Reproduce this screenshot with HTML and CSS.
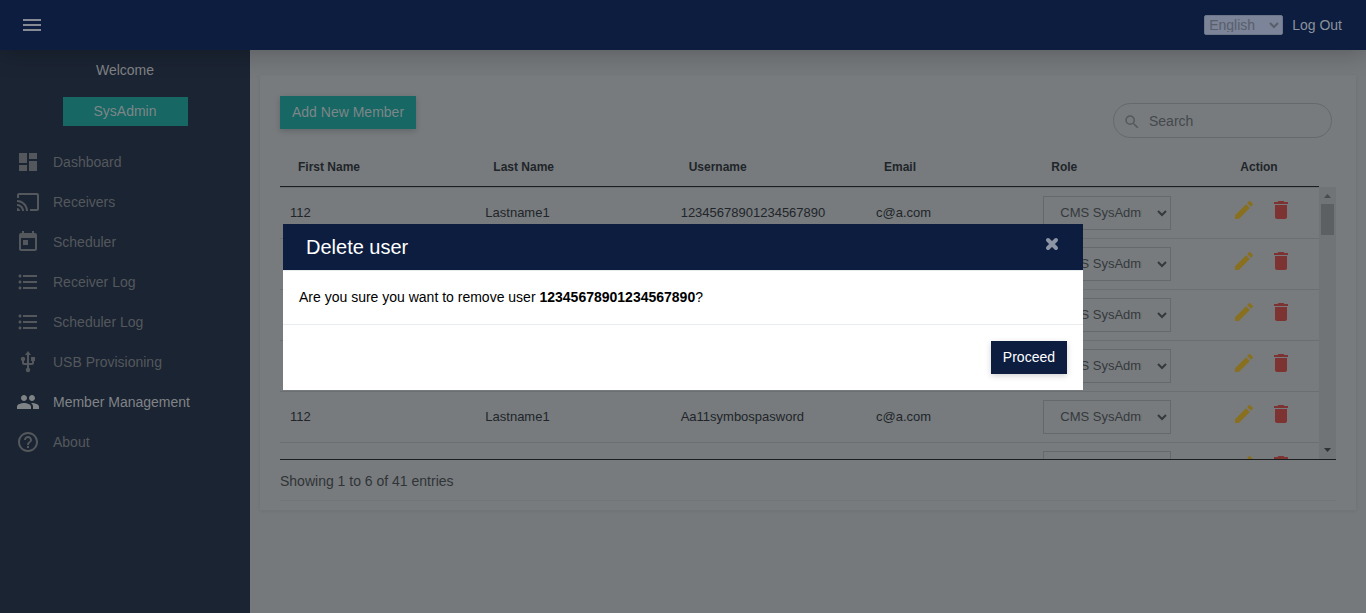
FILE: index.html
```
<!DOCTYPE html>
<html lang="en">
<head>
<meta charset="utf-8">
<title>Member Management</title>
<link rel="stylesheet" href="styles.css">
</head>
<body>
<svg class="sprite" aria-hidden="true">
  <symbol id="i-edit" viewBox="0 0 24 24"><path d="M3 17.25V21h3.75L17.81 9.94l-3.75-3.75L3 17.25zM20.71 7.04a1 1 0 0 0 0-1.41l-2.34-2.34a1 1 0 0 0-1.41 0l-1.83 1.83 3.75 3.75 1.83-1.83z"/></symbol>
  <symbol id="i-delete" viewBox="0 0 24 24"><path d="M6 19c0 1.1.9 2 2 2h8c1.1 0 2-.9 2-2V7H6v12zM19 4h-3.500l-1-1h-5l-1 1H5v2h14V4z"/></symbol>
  <symbol id="i-list" viewBox="0 0 24 24"><path d="M4 10.5c-.83 0-1.500.67-1.500 1.500s.67 1.500 1.500 1.500 1.500-.67 1.500-1.500-.67-1.500-1.500-1.500zm0-6c-.83 0-1.500.67-1.500 1.500S3.170 7.500 4 7.500 5.500 6.830 5.500 6 4.830 4.500 4 4.500zm0 12c-.83 0-1.500.68-1.500 1.500s.68 1.500 1.500 1.500 1.500-.68 1.500-1.500-.67-1.500-1.500-1.500zM7 19h14v-2H7v2zm0-6h14v-2H7v2zm0-8v2h14V5H7z"/></symbol>
</svg>

<header class="topbar">
  <button class="menu-btn" type="button" aria-label="Toggle menu"><svg class="icon" viewBox="0 0 24 24"><path d="M3 18h18v-2H3v2zm0-5h18v-2H3v2zm0-7v2h18V6H3z"/></svg></button>
  <div class="topbar-right">
    <select class="language" aria-label="Language"><option>English</option></select>
    <a class="logout" href="#">Log Out</a>
  </div>
</header>

<div class="layout">
  <aside class="sidebar">
    <p class="welcome">Welcome</p>
    <button class="user-btn" type="button">SysAdmin</button>
    <nav class="nav">
      <a class="nav-link" href="#"><svg class="icon" viewBox="0 0 24 24"><path d="M3 13h8V3H3v10zm0 8h8v-6H3v6zm10 0h8V11h-8v10zm0-18v6h8V3h-8z"/></svg>Dashboard</a>
      <a class="nav-link" href="#"><svg class="icon" viewBox="0 0 24 24"><path d="M21 3H3c-1.100 0-2 .9-2 2v3h2V5h18v14h-7v2h7c1.100 0 2-.9 2-2V5c0-1.100-.9-2-2-2zM1 18v3h3c0-1.660-1.340-3-3-3zm0-4v2c2.760 0 5 2.240 5 5h2c0-3.870-3.130-7-7-7zm0-4v2c4.970 0 9 4.030 9 9h2c0-6.080-4.930-11-11-11z"/></svg>Receivers</a>
      <a class="nav-link" href="#"><svg class="icon" viewBox="0 0 24 24"><path d="M19 3h-1V1h-2v2H8V1H6v2H5c-1.110 0-1.990.9-1.990 2L3 19c0 1.100.89 2 2 2h14c1.100 0 2-.9 2-2V5c0-1.100-.9-2-2-2zm0 16H5V8h14v11zM7 10h5v5H7z"/></svg>Scheduler</a>
      <a class="nav-link" href="#"><svg class="icon"><use href="#i-list"/></svg>Receiver Log</a>
      <a class="nav-link" href="#"><svg class="icon"><use href="#i-list"/></svg>Scheduler Log</a>
      <a class="nav-link" href="#"><svg class="icon" viewBox="0 0 24 24"><path d="M15 7v4h1v2h-3V5h2l-3-4-3 4h2v8H8v-2.070c.7-.37 1.200-1.080 1.200-1.930 0-1.210-.99-2.200-2.200-2.200S4.800 7.790 4.800 9c0 .85.5 1.560 1.200 1.930V13c0 1.110.89 2 2 2h3v3.050c-.71.37-1.200 1.100-1.200 1.950a2.200 2.200 0 0 0 4.400 0c0-.85-.49-1.580-1.200-1.950V15h3c1.110 0 2-.89 2-2v-2h1V7h-4z"/></svg>USB Provisioning</a>
      <a class="nav-link active" href="#" aria-current="page"><svg class="icon" viewBox="0 0 24 24"><path d="M16 11c1.660 0 2.990-1.340 2.990-3S17.660 5 16 5s-3 1.340-3 3 1.340 3 3 3zm-8 0c1.660 0 2.990-1.340 2.990-3S9.660 5 8 5 5 6.340 5 8s1.340 3 3 3zm0 2c-2.330 0-7 1.170-7 3.500V19h14v-2.500C15 14.170 10.330 13 8 13zm8 0c-.29 0-.62.02-.97.05 1.160.84 1.970 1.970 1.970 3.450V19h6v-2.500c0-2.330-4.670-3.500-7-3.500z"/></svg>Member Management</a>
      <a class="nav-link" href="#"><svg class="icon" viewBox="0 0 24 24"><path d="M11 18h2v-2h-2v2zm1-16C6.480 2 2 6.480 2 12s4.480 10 10 10 10-4.480 10-10S17.520 2 12 2zm0 18c-4.410 0-8-3.590-8-8s3.590-8 8-8 8 3.590 8 8-3.590 8-8 8zm0-14c-2.210 0-4 1.790-4 4h2c0-1.100.9-2 2-2s2 .9 2 2c0 2-3 1.750-3 5h2c0-2.250 3-2.500 3-5 0-2.210-1.790-4-4-4z"/></svg>About</a>
    </nav>
  </aside>

  <main class="content">
    <section class="card">
      <div class="toolbar">
        <button class="btn btn-teal" type="button">Add New Member</button>
        <label class="search">
          <svg class="search-icon" viewBox="0 0 24 24"><path d="M15.500 14h-.79l-.28-.27A6.470 6.470 0 0 0 16 9.500 6.500 6.500 0 1 0 9.500 16c1.610 0 3.090-.59 4.230-1.570l.27.28v.79l5 4.990L20.490 19l-4.990-5zm-6 0C7.010 14 5 11.990 5 9.500S7.010 5 9.500 5 14 7.010 14 9.500 11.990 14 9.500 14z"/></svg>
          <input class="search-input" type="text" placeholder="Search" aria-label="Search">
        </label>
      </div>

      <div class="table-area">
        <div class="table-scroll">
          <table class="members">
            <colgroup><col class="c-name"><col class="c-name"><col class="c-name"><col class="c-email"><col class="c-role"><col></colgroup>
            <thead><tr><th>First Name</th><th>Last Name</th><th>Username</th><th>Email</th><th>Role</th><th>Action</th></tr></thead>
            <tbody>
              <tr><td>112</td><td>Lastname1</td><td>12345678901234567890</td><td>c@a.com</td><td><select class="role" aria-label="Role"><option>CMS SysAdmin</option></select></td><td><div class="actions"><button type="button" class="edit" aria-label="Edit"><svg class="icon"><use href="#i-edit"/></svg></button><button type="button" class="delete" aria-label="Delete"><svg class="icon"><use href="#i-delete"/></svg></button></div></td></tr>
              <tr><td></td><td></td><td></td><td></td><td><select class="role" aria-label="Role"><option>CMS SysAdmin</option></select></td><td><div class="actions"><button type="button" class="edit" aria-label="Edit"><svg class="icon"><use href="#i-edit"/></svg></button><button type="button" class="delete" aria-label="Delete"><svg class="icon"><use href="#i-delete"/></svg></button></div></td></tr>
              <tr><td></td><td></td><td></td><td></td><td><select class="role" aria-label="Role"><option>CMS SysAdmin</option></select></td><td><div class="actions"><button type="button" class="edit" aria-label="Edit"><svg class="icon"><use href="#i-edit"/></svg></button><button type="button" class="delete" aria-label="Delete"><svg class="icon"><use href="#i-delete"/></svg></button></div></td></tr>
              <tr><td></td><td></td><td></td><td></td><td><select class="role" aria-label="Role"><option>CMS SysAdmin</option></select></td><td><div class="actions"><button type="button" class="edit" aria-label="Edit"><svg class="icon"><use href="#i-edit"/></svg></button><button type="button" class="delete" aria-label="Delete"><svg class="icon"><use href="#i-delete"/></svg></button></div></td></tr>
              <tr><td>112</td><td>Lastname1</td><td>Aa11symbospasword</td><td>c@a.com</td><td><select class="role" aria-label="Role"><option>CMS SysAdmin</option></select></td><td><div class="actions"><button type="button" class="edit" aria-label="Edit"><svg class="icon"><use href="#i-edit"/></svg></button><button type="button" class="delete" aria-label="Delete"><svg class="icon"><use href="#i-delete"/></svg></button></div></td></tr>
              <tr><td></td><td></td><td></td><td></td><td><select class="role" aria-label="Role"><option>CMS SysAdmin</option></select></td><td><div class="actions"><button type="button" class="edit" aria-label="Edit"><svg class="icon"><use href="#i-edit"/></svg></button><button type="button" class="delete" aria-label="Delete"><svg class="icon"><use href="#i-delete"/></svg></button></div></td></tr>
            </tbody>
          </table>
        </div>
        <div class="scrollbar" aria-hidden="true">
          <svg class="scroll-arrow" viewBox="0 0 17 17"><path d="M5 11L8.500 7L12 11z"/></svg>
          <div class="scroll-thumb"></div>
          <svg class="scroll-arrow scroll-down" viewBox="0 0 17 17"><path d="M5 6L8.500 10L12 6z"/></svg>
        </div>
      </div>
      <p class="entries">Showing 1 to 6 of 41 entries</p>
    </section>
  </main>
</div>

<div class="overlay">
  <div class="modal" role="dialog" aria-modal="true" aria-labelledby="modal-title">
    <div class="modal-header">
      <h1 class="modal-title" id="modal-title">Delete user</h1>
      <button class="close" type="button" aria-label="Close"><svg class="close-icon" viewBox="0 0 14 14"><path d="M3 3L11 11M11 3L3 11"/></svg></button>
    </div>
    <p class="modal-body">Are you sure you want to remove user <b>12345678901234567890</b>?</p>
    <div class="modal-footer"><button class="btn btn-navy" type="button">Proceed</button></div>
  </div>
</div>
</body>
</html>
```
FILE: styles.css
```
* { box-sizing: border-box; }

body {
  margin: 0;
  min-height: 100vh;
  display: flex;
  flex-direction: column;
  overflow: hidden;
  background: #75797c;
  color: #212529;
  font: 14px/20px "Liberation Sans", Arial, sans-serif;
}

button, select, input { font: inherit; color: inherit; }
button { border: 0; padding: 0; background: none; cursor: pointer; }
a { text-decoration: none; color: inherit; }
p, h1 { margin: 0; }
.sprite { display: none; }
.icon { display: block; width: 24px; height: 24px; fill: currentColor; }

.topbar {
  position: relative;
  z-index: 1;
  display: flex;
  align-items: center;
  justify-content: space-between;
  height: 50px;
  padding: 0 24px 0 20px;
  background: #0c1d3f;
  box-shadow: 0 4px 24px rgba(0, 0, 0, .22);
  color: #8d929c;
}
.menu-btn { color: #868a92; }
.topbar-right { display: flex; align-items: center; gap: 9px; }
.language {
  width: 79px;
  height: 20px;
  padding: 0 0 2px;
  border: 1px solid #6d7689;
  border-radius: 2px;
  background: #7b8498;
  color: #585e6b;
}

.layout { flex: 1; display: flex; }
.sidebar {
  flex: 0 0 250px;
  display: flex;
  flex-direction: column;
  align-items: center;
  padding-top: 10px;
  background: #1b2433;
}
.welcome { color: #808285; }
.user-btn {
  width: 125px;
  height: 29px;
  margin: 17px 0 16px;
  padding-bottom: 2px;
  background: #176764;
  color: #7d8688;
}
.nav { align-self: stretch; }
.nav-link {
  display: flex;
  align-items: center;
  gap: 13px;
  height: 40px;
  padding-left: 16px;
  color: #54585c;
}
.nav-link.active { color: #808386; }

.content { flex: 1; min-width: 0; padding: 25px 10px; }
.card {
  padding: 21px 20px 9px;
  background: #777b7e;
  box-shadow: 0 1px 4px rgba(0, 0, 0, .07);
}
.toolbar {
  display: flex;
  justify-content: space-between;
  align-items: flex-start;
  padding-right: 4px;
}
.btn {
  height: 33px;
  padding: 0 12px;
  box-shadow: 0 2px 6px rgba(0, 0, 0, .18);
}
.btn-teal { padding-bottom: 2px; background: #176764; color: #7d8688; }
.btn-navy { background: #0c1d3f; color: #fff; }
.search {
  display: flex;
  align-items: center;
  gap: 8px;
  width: 219px;
  height: 35px;
  margin-top: 7px;
  padding: 0 9px;
  border: 1px solid #66696c;
  border-radius: 18px;
}
.search-icon { flex: none; width: 18px; height: 18px; margin-top: 2px; fill: #55595c; }
.search-input { flex: 1; min-width: 0; padding: 0; border: 0; outline: 0; background: none; }
.search-input::placeholder { color: #44484c; opacity: 1; }

.table-area {
  display: flex;
  height: 322px;
  border-bottom: 1px solid #1b1d1f;
}
.table-scroll { flex: 1; overflow: hidden; }
.members {
  width: 100%;
  table-layout: fixed;
  border-spacing: 0;
  font-size: 13px;
}
.c-name { width: 18.8%; }
.c-email { width: 16.1%; }
.c-role { width: 18.2%; }
th {
  height: 49px;
  padding: 9px 18px 0;
  border-bottom: 1px solid #1b1d1f;
  font-size: 12px;
  text-align: left;
}
td { height: 51px; padding: 0 10px; border-top: 1px solid #6b6f72; }
.role {
  display: block;
  width: 128px;
  height: 34px;
  padding: 0 12px 2px;
  border: 1px solid #65696c;
  border-radius: 0;
  background: #777b7e;
  color: #35393c;
}
.actions { display: flex; gap: 13px; padding-bottom: 7px; }
.edit { color: #89701f; }
.delete { color: #7d3331; }

.scrollbar {
  flex: 0 0 17px;
  display: flex;
  flex-direction: column;
  align-items: center;
  margin-top: 49px;
  background: #707476;
}
.scroll-arrow { width: 17px; height: 17px; fill: #494c4e; }
.scroll-down { margin-top: auto; fill: #303335; }
.scroll-thumb { width: 13px; height: 31px; background: #5c6062; }
.entries { padding: 11px 0 9px; border-bottom: 1px solid #727679; color: #303437; }

.overlay {
  position: fixed;
  inset: 0;
  z-index: 2;
  display: flex;
  align-items: center;
  justify-content: center;
}
.modal { width: 800px; max-width: 100%; background: #fff; color: #000; }
.modal-header {
  display: flex;
  justify-content: space-between;
  align-items: center;
  height: 47px;
  padding: 0 24px 0 23px;
  border-bottom: 1px solid #e9ecef;
  background: #0c1d3f;
  background-clip: padding-box;
  color: #fff;
}
.modal-title { font-size: 20px; font-weight: 400; line-height: 24px; }
.close { padding-bottom: 6px; }
.close-icon {
  display: block;
  width: 14px;
  height: 14px;
  fill: none;
  stroke: #8d95a4;
  stroke-width: 4;
  stroke-linecap: round;
}
.modal-body { padding: 16px 16px 17px; border-bottom: 1px solid #e9ecef; }
.modal-footer { display: flex; justify-content: flex-end; padding: 16px; }
```
